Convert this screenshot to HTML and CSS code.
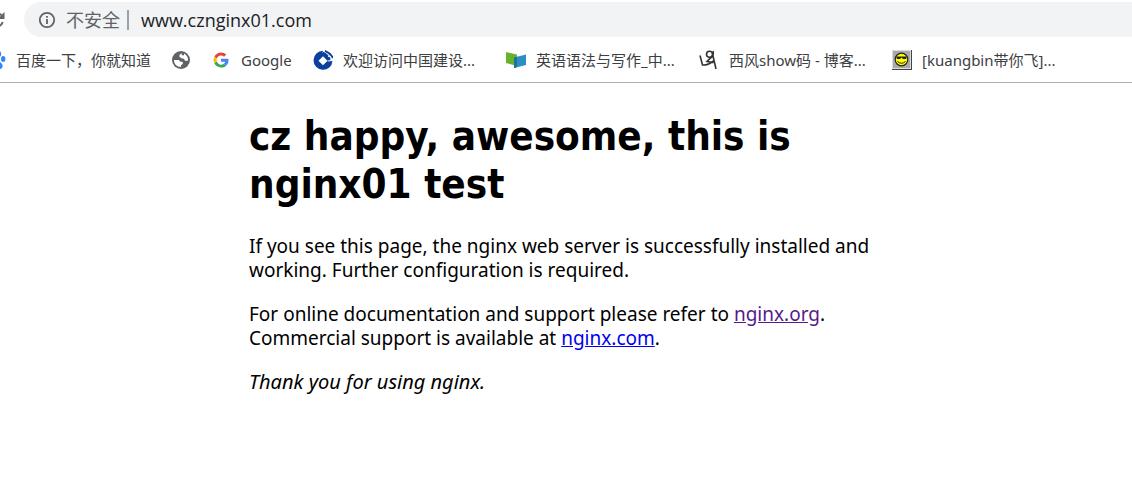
FILE: index.html
```html
<!DOCTYPE html>
<html lang="zh-CN">
<head>
<meta charset="utf-8">
<title>nginx01 test</title>
<link rel="stylesheet" href="styles.css">
</head>
<body>
<header class="browser">
  <div class="toolbar">
    <button class="reload" aria-label="Reload">
      <svg width="20" height="20" viewBox="0 0 20 20"><path d="M15.500 5.500A7 7 0 1 0 16.700 12" fill="none" stroke="#5f6368" stroke-width="2"/><path d="M18.500 2v7h-7z" fill="#5f6368"/></svg>
    </button>
    <div class="omnibox">
      <svg class="info" width="18" height="18" viewBox="0 0 18 18"><circle cx="9" cy="9" r="7.200" fill="none" stroke="#5f6368" stroke-width="1.800"/><path d="M9 8v5M9 5v1.800" stroke="#5f6368" stroke-width="1.800"/></svg>
      <label class="security" for="url">不安全</label>
      <span class="divider"></span>
      <input class="url" id="url" type="text" value="www.cznginx01.com">
    </div>
  </div>
  <nav class="bookmarks">
    <a class="bookmark" href="#"><svg width="20" height="20" viewBox="0 0 20 20"><g fill="#3385ff"><ellipse cx="3" cy="9" rx="2.200" ry="3"/><ellipse cx="7.300" cy="4" rx="2.200" ry="3"/><ellipse cx="13" cy="4" rx="2.200" ry="3"/><ellipse cx="17.200" cy="9" rx="2.200" ry="3"/><path d="M10 8.500c2.600 0 3.200 3 5.200 4.500 2.500 2 1.600 6-1.400 6-1.700 0-2-.5-3.800-.5s-2.100.5-3.800.5c-3 0-3.900-4-1.400-6C6.800 11.500 7.400 8.500 10 8.500z"/></g></svg><span>百度一下，你就知道</span></a>
    <a class="bookmark" href="#" aria-label="Website"><svg width="20" height="20" viewBox="0 0 20 20"><circle cx="10" cy="10" r="9" fill="#5f6368"/><path d="M10.500 3 8.500 5v2l2.500 1.500 2 .3 1 2H17c.3-3.500-1.500-6-4-7.300v1.800h-2.200zM3 10c0 4 2.800 7 7 7v-1.800l1.800-1.200v-2L9 11.500 8 10z" fill="#fff"/></svg></a>
    <a class="bookmark google" href="#"><svg width="20" height="20" viewBox="0 0 48 48"><path fill="#ea4335" d="M24 13c3 0 5.500 1 7.500 3l5-5C33.500 8 29.300 6 24 6 17 6 11 10 8 16l6 4.500C15.500 16 19.400 13 24 13z"/><path fill="#4285f4" d="M42 24.500c0-1.300-.1-2.500-.4-3.700H24V28h10c-.5 2.500-1.800 4.300-3.900 5.700l5.800 4.500c3.700-3.400 6.100-8.200 6.100-13.700z"/><path fill="#fbbc05" d="M14 27.500a11 11 0 0 1 0-7L8 16c-2.600 5-2.600 11 0 16z"/><path fill="#34a853" d="M24 42c5 0 9-1.500 11.900-3.800l-5.800-4.500C28.500 34.700 26.400 35.300 24 35.300c-4.600 0-8.500-3.300-10-7.800L8 32c3 6 9 10 16 10z"/></svg><span>Google</span></a>
    <a class="bookmark site" href="#"><svg width="20" height="20" viewBox="0 0 20 20"><path d="M10 .8a9.500 9.500 0 1 0 9.500 10.200L17 10 9.500 3z" fill="#0b409c"/><path d="m10 6.300 4.500 4.500-4.500 4.500-4.500-4.500z" fill="#fff"/><path d="M9.500 3.500q4.200 1.500 6.700 6.500" fill="none" stroke="#0b409c" stroke-width="3.500"/><path d="M15 6.500l4-1M14.500 11l5.500-.5" stroke="#fff" stroke-width="1"/><path d="M12 .8q5 2 8 7.200" fill="none" stroke="#0b409c" stroke-width="1.800"/></svg><span>欢迎访问中国建设...</span></a>
    <a class="bookmark site" href="#"><svg width="20" height="20" viewBox="0 0 20 20"><path d="m0 2 11 2.500V16L0 13z" fill="#66b22e"/><path d="m20 4.500-12 3v10.500l12-3z" fill="#2b8ec4"/><path d="m8 7.500 3-.8v10.500l-3 .8z" fill="#20729a"/></svg><span>英语语法与写作_中...</span></a>
    <a class="bookmark site" href="#"><svg width="20" height="20" viewBox="0 0 20 20" fill="none" stroke="#333" stroke-width="1.600"><circle cx="10.500" cy="4.200" r="3"/><path d="M14 1c1 3.500-.5 6-3 7.500L8 11.500l6.500 1M14 6l3 13M1 5.500l2.500 9.500q5 .5 11-4"/></svg><span>西风show码 - 博客...</span></a>
    <a class="bookmark site" href="#"><svg width="20" height="20" viewBox="0 0 20 20"><path fill="#444" d="M0 0h20v20H0z"/><path fill="#ddd" d="M0 0h19v19H0z"/><path fill="#aaa" d="M1 1h17v17H1z"/><circle cx="9.500" cy="9.500" r="6.300" fill="#ff0" stroke="#222" stroke-width="1.200"/><path d="M4 6.500h11l-1 2.500h-3L9.500 7.500 8 9H5z" fill="#222"/><path d="M5.500 11.500q4 3.500 8 0" fill="none" stroke="#222"/></svg><span>[kuangbin带你飞]...</span></a>
  </nav>
</header>
<main class="page">
  <h1>cz happy, awesome, this is nginx01 test</h1>
  <p>If you see this page, the nginx web server is successfully installed and working. Further configuration is required.</p>
  <p>For online documentation and support please refer to <a class="visited" href="#">nginx.org</a>.<br>
  Commercial support is available at <a href="#">nginx.com</a>.</p>
  <p><em>Thank you for using nginx.</em></p>
</main>
</body>
</html>
```
FILE: styles.css
```css
* { box-sizing: border-box; }
body { margin: 0; background: #fff; color: #000; }
.browser {
  border-bottom: 1px solid #b0b0b0;
  font-family: "Noto Sans", "Noto Sans CJK SC", sans-serif;
  overflow: hidden;
}
.toolbar { display: flex; align-items: center; padding-top: 2px; }
.reload {
  flex: none;
  width: 20px;
  height: 20px;
  margin: 0 18px 0 -14px;
  padding: 0;
  border: 0;
  background: none;
}
.reload svg, .bookmark svg { display: block; flex: none; }
.omnibox {
  display: flex;
  align-items: center;
  flex: 1;
  height: 35px;
  padding-left: 14px;
  border-radius: 18px 0 0 18px;
  background: #f1f3f4;
}
.security { margin-left: 10px; font-size: 18px; line-height: 24px; color: #5f6368; }
.divider { width: 2px; height: 20px; margin: 0 12px 0 7px; background: #9aa0a6; }
.url {
  flex: 1;
  min-width: 0;
  padding: 0;
  border: 0;
  outline: 0;
  background: none;
  color: #202124;
  font: 18px/24px "Open Sans", sans-serif;
}
.bookmarks { display: flex; align-items: center; height: 45px; gap: 20px; margin-left: -14px; }
.bookmark {
  display: flex;
  align-items: center;
  flex: none;
  gap: 10px;
  color: #3c4043;
  font-size: 15px;
  line-height: 24px;
  text-decoration: none;
  white-space: nowrap;
}
.google { min-width: 82px; }
.site { width: 173px; }
.page {
  max-width: 634px;
  margin: 0 auto;
  font: 19px/24px "Noto Sans", sans-serif;
}
.page h1 {
  margin: 29px 0 26px;
  font-family: "DejaVu Sans Condensed", "Noto Sans", sans-serif;
  font-size: 40px;
  line-height: 48px;
}
.page p { margin: 0 0 20px; }
.page em { font-size: 20px; }
.page a { color: #0000ee; }
.page .visited { color: #551a8b; }
```
